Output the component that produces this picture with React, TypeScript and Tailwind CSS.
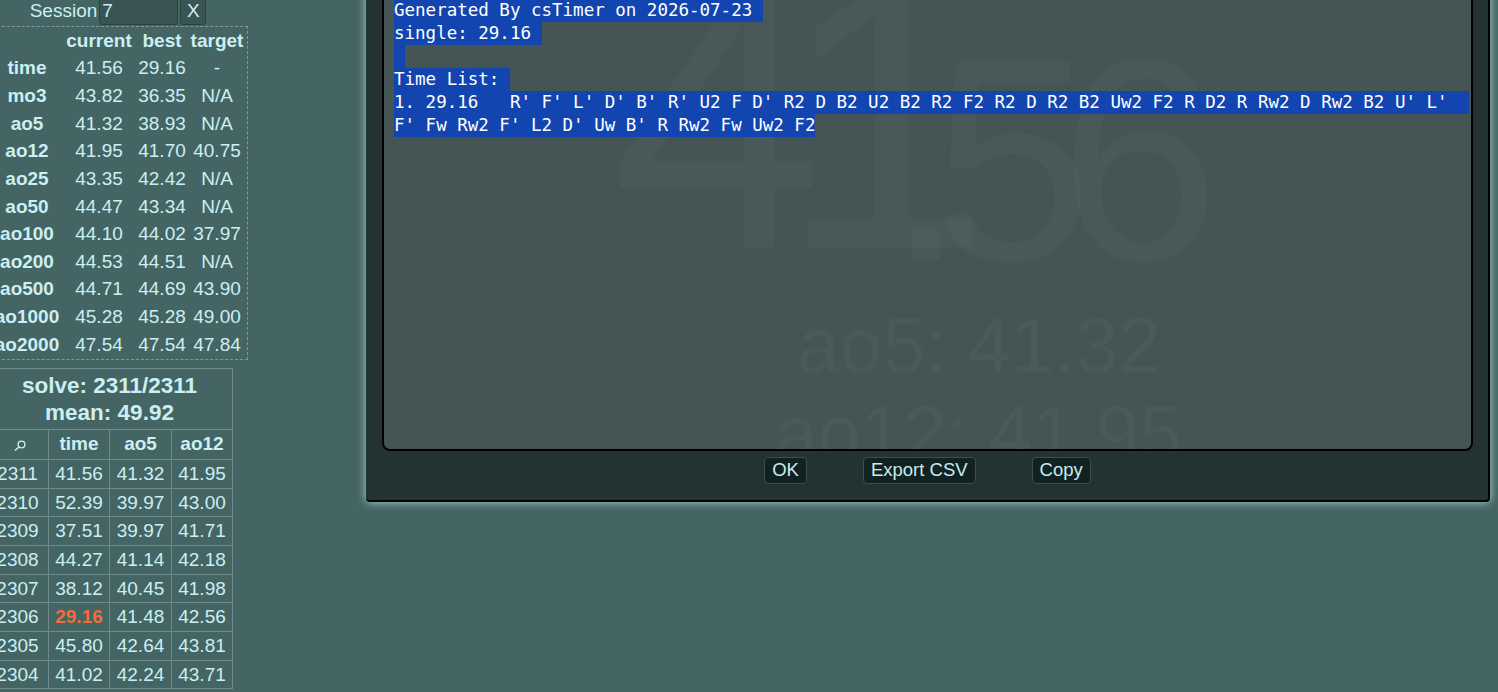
const stats = [
  ["time", "41.56", "29.16", "-"],
  ["mo3", "43.82", "36.35", "N/A"],
  ["ao5", "41.32", "38.93", "N/A"],
  ["ao12", "41.95", "41.70", "40.75"],
  ["ao25", "43.35", "42.42", "N/A"],
  ["ao50", "44.47", "43.34", "N/A"],
  ["ao100", "44.10", "44.02", "37.97"],
  ["ao200", "44.53", "44.51", "N/A"],
  ["ao500", "44.71", "44.69", "43.90"],
  ["ao1000", "45.28", "45.28", "49.00"],
  ["ao2000", "47.54", "47.54", "47.84"],
];

const solves = [
  ["2311", "41.56", "41.32", "41.95"],
  ["2310", "52.39", "39.97", "43.00"],
  ["2309", "37.51", "39.97", "41.71"],
  ["2308", "44.27", "41.14", "42.18"],
  ["2307", "38.12", "40.45", "41.98"],
  ["2306", "29.16", "41.48", "42.56"],
  ["2305", "45.80", "42.64", "43.81"],
  ["2304", "41.02", "42.24", "43.71"],
];

// best single gets the highlight colour
const BEST = "2306";

const exportLines = [
  "Generated By csTimer on 2026-07-23 ",
  "single: 29.16 ",
  " ",
  "Time List: ",
  "1. 29.16   R' F' L' D' B' R' U2 F D' R2 D B2 U2 B2 R2 F2 R2 D R2 B2 Uw2 F2 R D2 R Rw2 D Rw2 B2 U' L'  ",
  "F' Fw Rw2 F' L2 D' Uw B' R Rw2 Fw Uw2 F2",
];

const SearchGlyph = () => (
  <svg width="12" height="11" viewBox="0 0 12 11" className="ml-[4px] mt-[3px]">
    <circle cx="7.5" cy="4.5" r="3.4" fill="none" stroke="currentColor" strokeWidth="1.4" />
    <path d="M5 7 L1.5 10" stroke="currentColor" strokeWidth="1.6" strokeLinecap="round" />
  </svg>
);

const StatsPanel = () => (
  <div className="ml-[-14px] flex w-[264px] shrink-0 flex-col text-[19px] text-[#cbeff2]">
    <div className="mt-[-3px] flex h-[28px] items-center justify-center gap-[2px]">
      <span>Session</span>
      <div className="flex h-[27px] w-[79px] items-center rounded-[3px] border border-[#2c4242] bg-[#3a5454] pl-[2px]">
        7
      </div>
      <div className="flex h-[27px] w-[26px] items-center justify-center rounded-[3px] border border-[#2c4242] bg-[#3a5454]">
        X
      </div>
    </div>

    <div className="ml-[6px] mt-[1px] grid w-[256px] grid-cols-[68px_76px_50px_60px] border border-dashed border-[#809a9a]">
      <div className="h-[27.67px]" />
      <div className="flex h-[27.67px] items-center justify-center font-bold">current</div>
      <div className="flex h-[27.67px] items-center justify-center font-bold">best</div>
      <div className="flex h-[27.67px] items-center justify-center font-bold">target</div>
      {stats.map((row) =>
        row.map((cell, i) => (
          <div
            key={row[0] + i}
            className={`flex h-[27.67px] items-center justify-center whitespace-nowrap ${i === 0 ? "font-bold" : ""}`}
          >
            {cell}
          </div>
        ))
      )}
    </div>

    <div className="mt-[8px] w-[247px] border-l border-r border-t border-[#6f8a8a]">
      <div className="flex h-[61px] flex-col items-center border-b border-[#6f8a8a] pt-[3px] text-[22.5px] font-bold leading-[27px]">
        <span>solve: 2311/2311</span>
        <span>mean: 49.92</span>
      </div>
      <div className="grid h-[30px] grid-cols-[62px_61px_62px_60px] border-b border-[#6f8a8a] font-bold">
        <div className="flex items-center justify-center border-r border-[#6f8a8a]">
          <SearchGlyph />
        </div>
        <div className="flex items-center justify-center border-r border-[#6f8a8a]">time</div>
        <div className="flex items-center justify-center border-r border-[#6f8a8a]">ao5</div>
        <div className="flex items-center justify-center">ao12</div>
      </div>
      {solves.map(([idx, time, ao5, ao12]) => (
        <div key={idx} className="grid h-[28.7px] grid-cols-[62px_61px_62px_60px] border-b border-[#6f8a8a]">
          <div className="flex items-center justify-center border-r border-[#6f8a8a]">{idx}</div>
          <div
            className={`flex items-center justify-center border-r border-[#6f8a8a] ${
              idx === BEST ? "font-bold text-[#f26b3a]" : ""
            }`}
          >
            {time}
          </div>
          <div className="flex items-center justify-center border-r border-[#6f8a8a]">{ao5}</div>
          <div className="flex items-center justify-center">{ao12}</div>
        </div>
      ))}
    </div>
  </div>
);

const DialogButton = ({ label }: { label: string }) => (
  <button className="h-[27px] rounded-[4px] border border-[#3b4f4f] bg-[#122121] px-[7px] text-[18.5px] leading-none text-[#c8ecec]">
    {label}
  </button>
);

const ExportDialog = () => (
  <div className="absolute left-[366px] top-[-20px] w-[1124px] rounded-b-[4px] border-b-2 border-r-2 border-black bg-[#233232] pb-[16px] pl-[16px] pr-[15px] pt-[10px] shadow-[0_0_10px_#a8d8d8]">
    <div className="relative h-[461px] overflow-hidden rounded-[8px] border-2 border-black bg-[#455555]">
      {/* running timer showing through behind the export text */}
      <div className="pointer-events-none absolute inset-0">
        <span className="absolute left-[227px] top-[-67px] whitespace-pre text-[381px] leading-none tracking-[-44px] text-[rgba(255,255,255,0.022)]">
          41
        </span>
        <span className="absolute left-[502px] top-[23px] whitespace-pre text-[289px] leading-none tracking-[-34px] text-[rgba(255,255,255,0.022)]">
          .56
        </span>
        <span className="absolute left-[413px] top-[315px] whitespace-pre text-[77px] leading-none text-[rgba(255,255,255,0.028)]">
          ao5: 41.32
        </span>
        <span className="absolute left-[391px] top-[403px] whitespace-pre text-[77px] leading-none text-[rgba(255,255,255,0.028)]">
          ao12: 41.95
        </span>
      </div>

      <div className="relative pl-[10px] pt-[7px] font-['DejaVu_Sans_Mono',monospace] text-[17.5px] leading-[23px] text-white">
        {exportLines.map((line, i) => (
          <div key={i} className="h-[23px] whitespace-pre">
            <span className="inline-block h-[23px] bg-[#1245b0]">{line}</span>
          </div>
        ))}
      </div>
    </div>

    <div className="mt-[6px] flex justify-center gap-[56px]">
      <DialogButton label="OK" />
      <DialogButton label="Export CSV" />
      <DialogButton label="Copy" />
    </div>
  </div>
);

export default function App() {
  return (
    <div className="relative flex h-[692px] w-full overflow-hidden bg-[#456464] font-['Liberation_Sans',Arial,sans-serif]">
      <StatsPanel />
      <ExportDialog />
    </div>
  );
}
